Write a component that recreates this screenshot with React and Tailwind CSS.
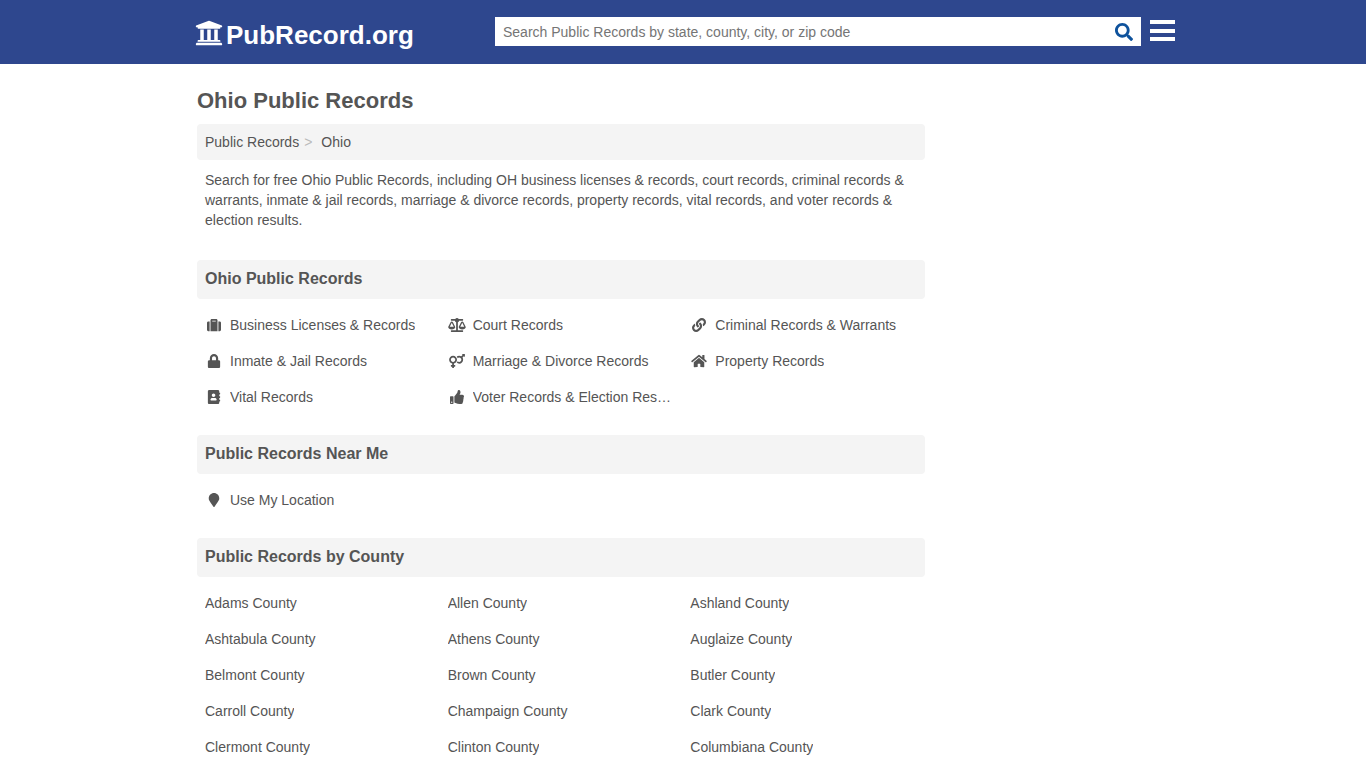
import {
    FaAddressBook,
    FaBalanceScale,
    FaHome,
    FaLink,
    FaLock,
    FaMapMarker,
    FaSearch,
    FaSuitcase,
    FaThumbsUp,
    FaUniversity,
    FaVenusMars,
} from "react-icons/fa";

const categories = [
    { label: "Business Licenses & Records", icon: FaSuitcase },
    { label: "Court Records", icon: FaBalanceScale },
    { label: "Criminal Records & Warrants", icon: FaLink },
    { label: "Inmate & Jail Records", icon: FaLock },
    { label: "Marriage & Divorce Records", icon: FaVenusMars },
    { label: "Property Records", icon: FaHome },
    { label: "Vital Records", icon: FaAddressBook },
    { label: "Voter Records & Election Results", icon: FaThumbsUp },
]

const nearMe = [{ label: "Use My Location", icon: FaMapMarker }]

const counties = [
    "Adams", "Allen", "Ashland",
    "Ashtabula", "Athens", "Auglaize",
    "Belmont", "Brown", "Butler",
    "Carroll", "Champaign", "Clark",
    "Clermont", "Clinton", "Columbiana",
].map((name) => ({ label: `${name} County` }))

function Header() {
    return (
        <header className="bg-[#2e478e]">
            <div className="mx-auto flex h-16 max-w-[984px] items-start justify-between gap-4 pl-1">
                {/* Logo */}
                <a href="#" className="flex shrink-0 items-start gap-[3px] pt-[19px] text-[26px] leading-8 font-bold text-white">
                    <FaUniversity className="h-7 w-7" />
                    PubRecord.org
                </a>

                <div className="flex w-[680px] min-w-0 items-start gap-[9px] pt-[17px]">
                    <form role="search" className="flex h-[29px] min-w-0 flex-1 bg-white" onSubmit={(e) => e.preventDefault()}>
                        <input
                            type="text"
                            aria-label="Search Public Records"
                            placeholder="Search Public Records by state, county, city, or zip code"
                            className="min-w-0 flex-1 px-2 pt-px text-sm text-[#555] placeholder:text-[#757575] focus:outline-none"
                        />
                        <button type="submit" aria-label="Search" className="px-2 text-[#0e529c]">
                            <FaSearch className="h-[18px] w-[18px]" />
                        </button>
                    </form>
                    <button type="button" aria-label="Menu" className="mt-[3px] flex h-[21px] w-[25px] shrink-0 flex-col justify-between">
                        <span className="h-1 w-full bg-white" />
                        <span className="h-1 w-full bg-white" />
                        <span className="h-1 w-full bg-white" />
                    </button>
                </div>
            </div>
        </header>
    )
}

function Section({ title, items }) {
    return (
        <section className="mb-5">
            <h2 className="mb-2 rounded bg-[#f4f4f4] px-2 pt-[7px] pb-2 text-base font-bold">{title}</h2>
            <ul className="grid grid-cols-1 sm:grid-cols-3">
                {items.map(({ label, icon: Icon }) => (
                    <li key={label} className="min-w-0">
                        <a href="#" className="flex items-center p-2 text-sm hover:underline">
                            {Icon && <Icon className="mr-[7px] h-[14px] w-[18px] shrink-0" />}
                            <span className="truncate">{label}</span>
                        </a>
                    </li>
                ))}
            </ul>
        </section>
    )
}

export default function App() {
    return (
        <div className="bg-white font-['Liberation_Sans',Arial,sans-serif] text-[#555]">
            <Header />

            <div className="mx-auto max-w-[972px]">
                <main className="max-w-[728px]">
                    <h1 className="pt-[23px] pb-[9px] text-[22px] leading-7 font-bold">Ohio Public Records</h1>

                    {/* Breadcrumb */}
                    <nav aria-label="Breadcrumb" className="rounded bg-[#f4f4f4] p-2">
                        <ol className="flex text-sm">
                            <li>
                                <a href="#" className="hover:underline">Public Records</a>
                                <span className="mr-[9px] ml-[5px] text-sm text-[#bbb]">&gt;</span>
                            </li>
                            <li>Ohio</li>
                        </ol>
                    </nav>

                    <p className="mb-5 px-2 py-[10px] text-sm">
                        Search for free Ohio Public Records, including OH business licenses &amp; records, court records,
                        criminal records &amp; warrants, inmate &amp; jail records, marriage &amp; divorce records, property
                        records, vital records, and voter records &amp; election results.
                    </p>

                    <Section title="Ohio Public Records" items={categories} />
                    <Section title="Public Records Near Me" items={nearMe} />
                    <Section title="Public Records by County" items={counties} />
                </main>
            </div>
        </div>
    )
}
